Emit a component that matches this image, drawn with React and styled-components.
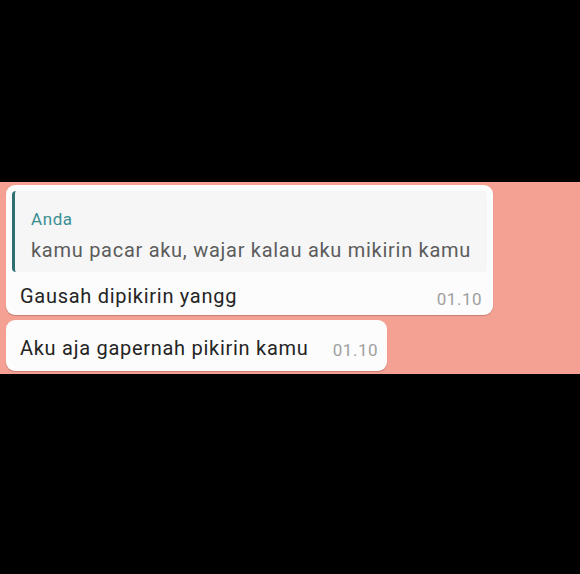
import React from "react";
import styled, { createGlobalStyle } from "styled-components";

const Global = createGlobalStyle`
  html, body {
    margin: 0;
    padding: 0;
    background: #000;
  }
  body {
    font-family: Roboto, "Noto Sans", sans-serif;
  }
`;

const Screen = styled.div`
  width: 580px;
  height: 574px;
  background: #000;
  display: flex;
  flex-direction: column;
  padding-top: 182px;
  box-sizing: border-box;
`;

const Chat = styled.div`
  background: #f4a194;
  height: 192px;
  box-sizing: border-box;
  padding: 3px 6px;
  display: flex;
  flex-direction: column;
  align-items: flex-start;
  gap: 5px;
`;

const Bubble = styled.div`
  background: #fcfcfc;
  border-radius: 9px;
  box-shadow: 0 1px 1px rgba(120, 60, 50, 0.35);
  width: ${(p) => p.width}px;
  box-sizing: border-box;
  padding: ${(p) => (p.quoted ? "6px 6px 0" : "0")};
`;

const Quote = styled.div`
  background: #f6f6f6;
  border-left: 3px solid #2f6f72;
  border-radius: 4px;
  padding: 19px 10px 10px 16px;
  height: 81px;
  box-sizing: border-box;
`;

const QuoteName = styled.div`
  color: #3a8f92;
  font-size: 17px;
  line-height: 18px;
  letter-spacing: 0.6px;
`;

const QuoteText = styled.div`
  color: #5c5c5c;
  font-size: 20px;
  line-height: 24px;
  letter-spacing: 0.72px;
  margin-top: 10px;
  white-space: nowrap;
`;

const Row = styled.div`
  display: flex;
  align-items: center;
  justify-content: space-between;
  height: ${(p) => p.h}px;
  padding: 0 ${(p) => p.pr}px 0 ${(p) => p.pl}px;
`;

const Text = styled.span`
  color: #242424;
  font-size: 20px;
  letter-spacing: 0.72px;
  margin-top: 4px;
  white-space: nowrap;
`;

const Time = styled.span`
  color: #a0a0a0;
  font-size: 17px;
  letter-spacing: 0.5px;
  margin-top: ${(p) => p.drop}px;
`;

export default function App() {
  return (
    <>
      <Global />
      <Screen>
        <Chat>
          <Bubble width={487} quoted>
            <Quote>
              <QuoteName>Anda</QuoteName>
              <QuoteText>kamu pacar aku, wajar kalau aku mikirin kamu</QuoteText>
            </Quote>
            <Row h={43} pl={8} pr={5}>
              <Text>Gausah dipikirin yangg</Text>
              <Time drop={10}>01.10</Time>
            </Row>
          </Bubble>
          <Bubble width={381}>
            <Row h={51} pl={14} pr={9}>
              <Text>Aku aja gapernah pikirin kamu</Text>
              <Time drop={8}>01.10</Time>
            </Row>
          </Bubble>
        </Chat>
      </Screen>
    </>
  );
}
